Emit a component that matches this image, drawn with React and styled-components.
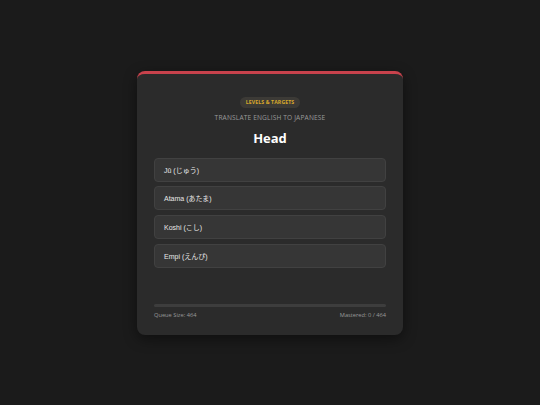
import React from 'react';
import styled, { createGlobalStyle } from 'styled-components';

const GlobalStyle = createGlobalStyle`
  html, body {
    margin: 0;
    padding: 0;
    background: #1b1b1b;
  }
`;

const options = ['Jū (じゅう)', 'Atama (あたま)', 'Koshi (こし)', 'Empi (えんぴ)'];

export default function App() {
  return (
    <>
      <GlobalStyle />
      <Page>
        <Card>
          <Header>
            <Badge>LEVELS &amp; TARGETS</Badge>
            <Subtitle>TRANSLATE ENGLISH TO JAPANESE</Subtitle>
            <Word>Head</Word>
          </Header>
          <Options>
            {options.map(o => (
              <Option key={o}>{o}</Option>
            ))}
          </Options>
          <Footer>
            <Track />
            <Stats>
              <span>Queue Size: 464</span>
              <span>Mastered: 0 / 464</span>
            </Stats>
          </Footer>
        </Card>
      </Page>
    </>
  );
}

const Page = styled.div`
  min-height: 100vh;
  display: flex;
  align-items: center;
  justify-content: center;
  font-family: "Open Sans", "Noto Sans CJK JP", sans-serif;
`;

const Card = styled.div`
  width: 266px;
  height: 264px;
  box-sizing: border-box;
  background: #2b2b2b;
  border-top: 3px solid #c8424c;
  border-radius: 8px;
  padding: 23px 17px 16px;
  display: flex;
  flex-direction: column;
  box-shadow: 0 4px 14px rgba(0, 0, 0, 0.45);
`;

const Header = styled.div`
  display: flex;
  flex-direction: column;
  align-items: center;
`;

const Badge = styled.div`
  background: #3c3a36;
  color: #d9a92b;
  font-size: 5.2px;
  font-weight: 700;
  letter-spacing: 0.1px;
  padding: 2.5px 6px;
  border-radius: 999px;
  line-height: 6px;
`;

const Subtitle = styled.div`
  margin-top: 5px;
  color: #9a9a9a;
  font-size: 6.6px;
  letter-spacing: 0.15px;
  line-height: 10px;
`;

const Word = styled.div`
  margin-top: 7px;
  color: #ffffff;
  font-size: 13px;
  font-weight: 700;
  line-height: 16px;
`;

const Options = styled.div`
  margin-top: 12px;
  display: flex;
  flex-direction: column;
  gap: 4.7px;
`;

const Option = styled.div`
  height: 24px;
  box-sizing: border-box;
  background: #363636;
  border: 1px solid #414141;
  border-radius: 4px;
  padding: 0 9px;
  display: flex;
  align-items: center;
  color: #e8e8e8;
  font-family: "Liberation Sans", "Noto Sans CJK JP", sans-serif;
  font-size: 7px;
`;

const Footer = styled.div`
  margin-top: auto;
`;

const Track = styled.div`
  height: 3px;
  background: #3d3d3d;
  border-radius: 2px;
`;

const Stats = styled.div`
  margin-top: 4px;
  display: flex;
  justify-content: space-between;
  color: #9a9a9a;
  font-size: 5.7px;
  line-height: 8px;
`;
